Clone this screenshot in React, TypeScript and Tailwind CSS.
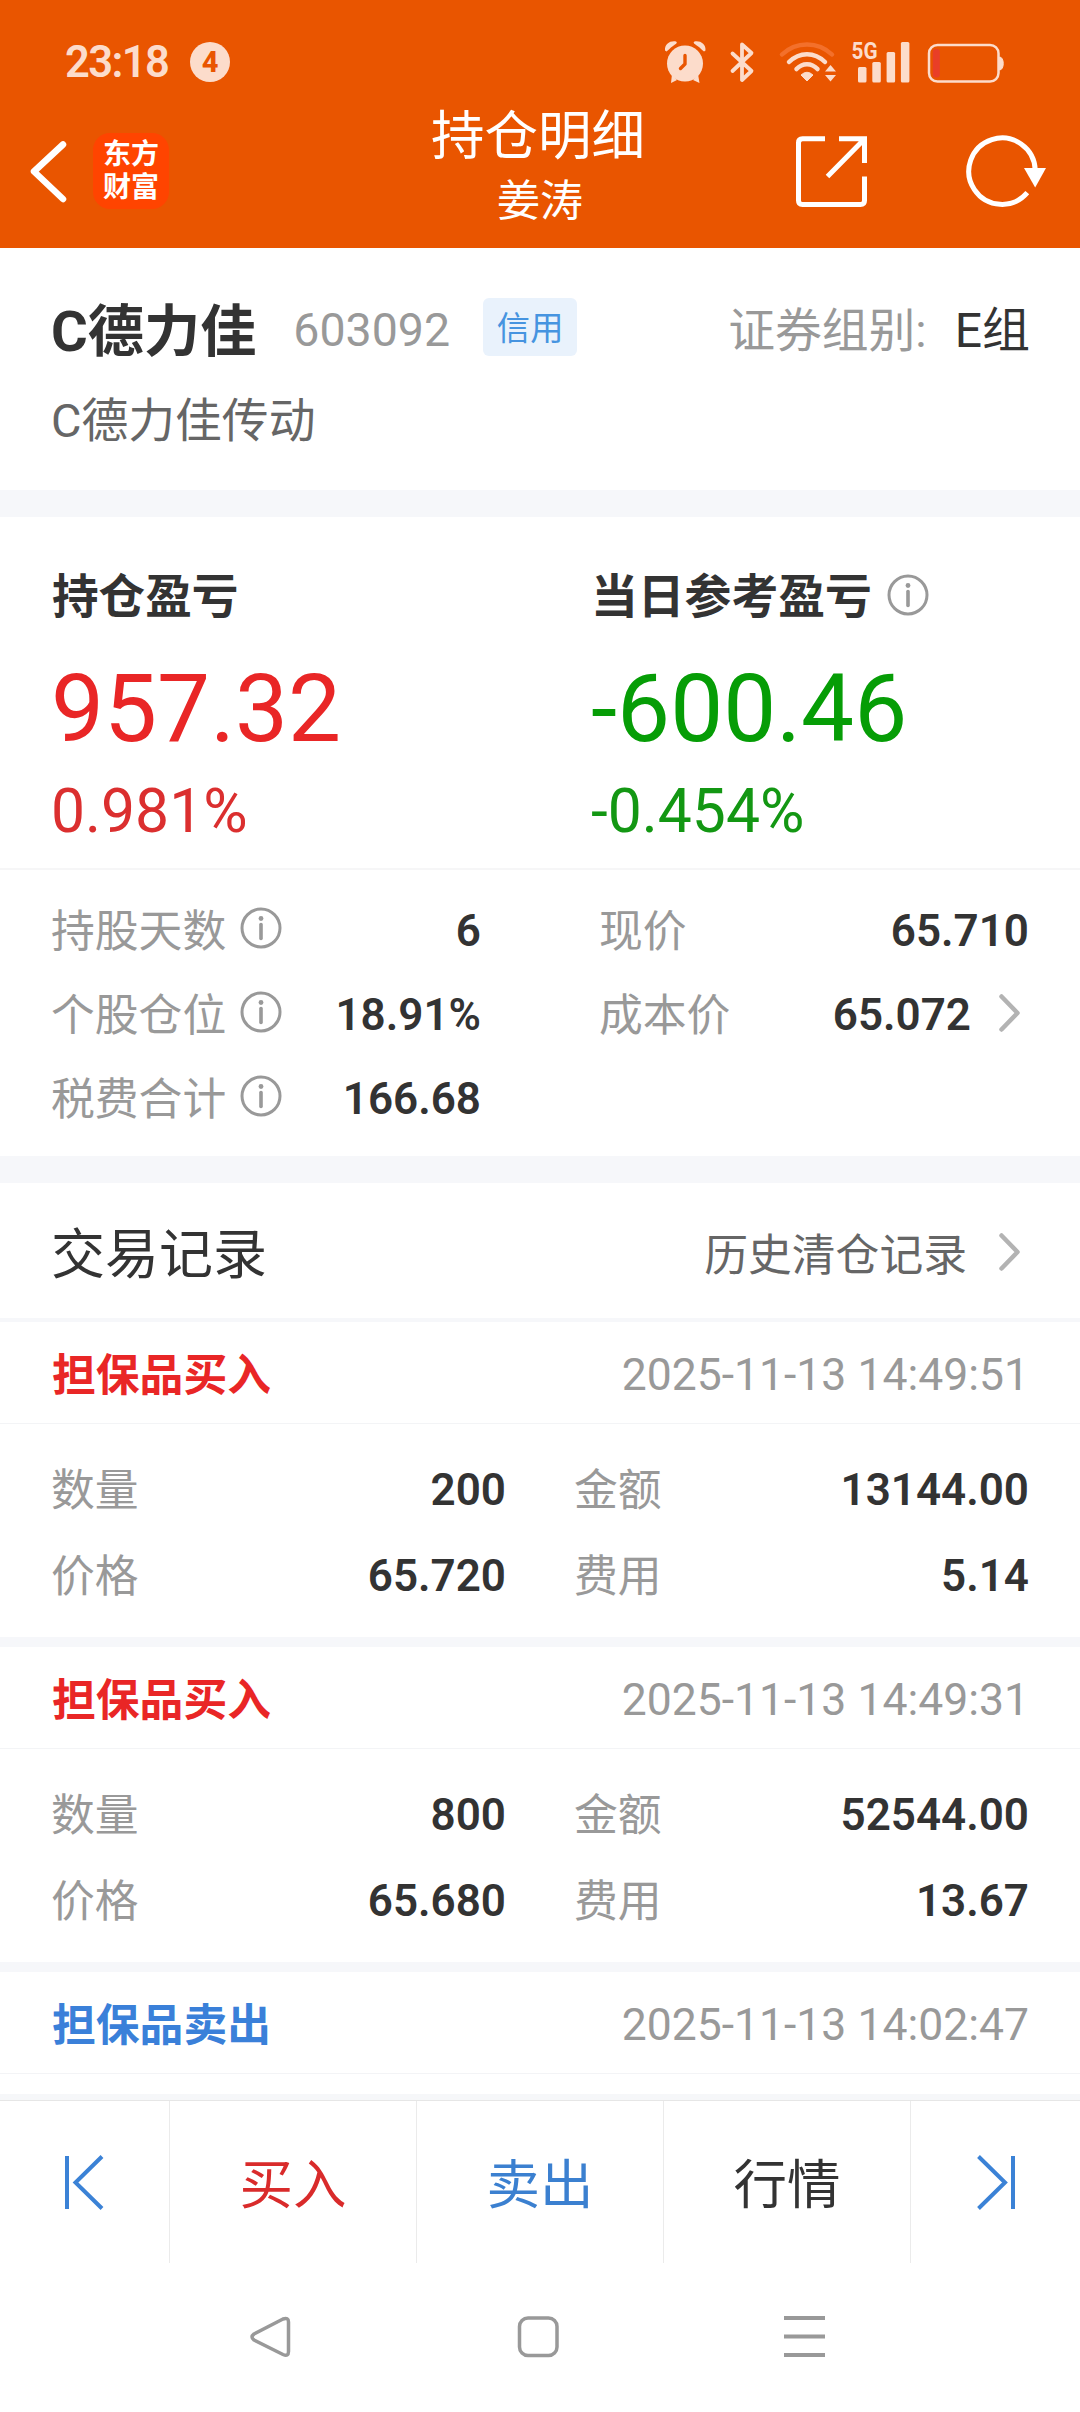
import type { ReactNode } from "react";

function InfoIcon({ className = "" }: { className?: string }) {
  return (
    <svg className={`h-[42px] w-[42px] shrink-0 ${className}`} viewBox="0 0 42 42" fill="none">
      <circle cx="21" cy="21" r="19" stroke="#999" strokeWidth="3" />
      <circle cx="21" cy="11.5" r="2.4" fill="#999" />
      <path d="M21 17.5v14" stroke="#999" strokeWidth="3.6" strokeLinecap="round" />
    </svg>
  );
}

function Chevron() {
  return (
    <svg className="h-10 w-6 shrink-0" viewBox="0 0 24 40" fill="none">
      <path d="M3.500 3.500L19.500 20L3.500 36.500" stroke="#b3b3b3" strokeWidth="4.500" strokeLinecap="round" strokeLinejoin="round" />
    </svg>
  );
}

function StatusIcons() {
  const c = "#fcdccb";
  return (
    <svg className="h-[50px] w-[344px]" viewBox="662 37 344 50" fill="none">
      <circle cx="685" cy="63.500" r="18" fill={c} />
      <path d="M672 74L671 83L677 80ZM698 74L699.500 83L693 80Z" fill={c} />
      <path d="M665 50.500C664.500 44 670 40.500 676 41.500C678 42.500 676 44 673 46C670 48 668 50.500 666.500 51.500ZM705.500 50.500C706 44 700.500 40.500 694.500 41.500C692.500 42.500 694.500 44 697.500 46C700.500 48 702.500 50.500 704 51.500Z" fill={c} />
      <path d="M685 55.500V64L680.500 68.500" stroke="#e95500" strokeWidth="3.400" strokeLinecap="round" strokeLinejoin="round" />
      <path d="M732.500 53.500L751.500 71L742 80V44.500L751.500 53L732.500 71" stroke={c} strokeWidth="3.800" strokeLinecap="round" strokeLinejoin="round" />
      <path d="M782 54.500C796 41 818 41 832 54.500" stroke="#f3702b" strokeWidth="4.500" strokeLinecap="round" />
      <path d="M789 62C799.500 51.500 814.500 51.500 825 62" stroke={c} strokeWidth="4.500" strokeLinecap="round" />
      <path d="M796.500 69C802.500 62.500 811.500 62.500 817.500 69" stroke={c} strokeWidth="4.500" strokeLinecap="round" />
      <path d="M801 75Q807 69.500 813 75L807 81Z" fill={c} stroke={c} strokeWidth="1" strokeLinejoin="round" />
      <path d="M825 71.500L830.500 65L836 71.500ZM825 75L830.500 81.500L836 75Z" fill={c} />
      <text x="851.500" y="58.500" fontSize="23" fontWeight="700" fontFamily="Roboto" textLength="26" lengthAdjust="spacingAndGlyphs" fill={c}>5G</text>
      <rect x="858" y="67" width="8.500" height="15.500" rx="1.500" fill={c} />
      <rect x="872.300" y="62" width="8.500" height="20.500" rx="1.500" fill={c} />
      <rect x="886.600" y="52" width="8.500" height="30.500" rx="1.500" fill={c} />
      <rect x="900.900" y="42" width="8.500" height="40.500" rx="1.500" fill={c} />
      <rect x="929" y="45" width="69.500" height="36.500" rx="8.500" stroke={c} strokeWidth="2.500" />
      <path d="M999.500 57C1004.500 57 1004.500 70 999.500 70Z" fill={c} stroke={c} />
      <rect x="932.800" y="49" width="7" height="28.500" rx="3" fill="#e93e27" />
    </svg>
  );
}

function Header() {
  return (
    <header className="flex h-[248px] shrink-0 flex-col bg-[#e95500] text-white">
      <div className="flex h-[100px] items-center justify-between pt-[24px] pr-[74px] pl-[65px] text-[#fcdccb]">
        <div className="flex items-center">
          <span className="relative top-px w-[125px] text-[43.500px] leading-none font-semibold tracking-[-1.600px]">23:18</span>
          <span className="flex size-10 items-center justify-center rounded-full bg-[#fcdccb] text-[29px] leading-none font-extrabold text-[#e95500]">4</span>
        </div>
        <StatusIcons />
      </div>
      <div className="grid h-[148px] grid-cols-[1fr_240px_1fr]">
        <div className="flex items-start pt-[33px] pl-7">
          <svg className="mt-[5px] h-[68px] w-[42px]" viewBox="28 138 42 68" fill="none">
            <path d="M63 144.500L34 171.500L63 199" stroke="white" strokeWidth="6.500" strokeLinecap="round" strokeLinejoin="round" />
          </svg>
          <div className="ml-[23px] flex size-[76px] flex-col items-center justify-center gap-[6px] rounded-[17px] bg-[#ff4400] text-[28px] leading-[27px] font-bold">
            <span>东方</span>
            <span>财富</span>
          </div>
        </div>
        <div className="flex flex-col items-center pt-[8px]">
          <h1 className="-ml-1 text-[53.500px] leading-[58px]">持仓明细</h1>
          <p className="mt-[10px] text-[43px] leading-[50px]">姜涛</p>
        </div>
        <div className="flex items-start justify-end pt-8 pr-8">
          <svg className="mr-[90px] h-[80px] w-[80px]" viewBox="792 132 80 80" fill="none" stroke="white" strokeWidth="5">
            <path d="M825 138.700H802.500Q798.500 138.700 798.500 142.700V200.500Q798.500 204.500 802.500 204.500H860.500Q864.500 204.500 864.500 200.500V176.500" />
            <path d="M839 138.700H864.500V163M864 139.500L827.500 176.500" />
          </svg>
          <svg className="h-[80px] w-[86px]" viewBox="962 132 86 80" fill="none">
            <path d="M1027.300 192.700A33.200 33.200 0 1 1 1035.200 170" stroke="white" strokeWidth="5" />
            <path d="M1024 168H1046L1035.200 187.500Z" fill="white" />
          </svg>
        </div>
      </div>
    </header>
  );
}

function Gap() {
  return <div className="h-[27px] shrink-0 bg-[#f6f7fa]" />;
}

function Metric({ label, info, children }: { label: string; info?: boolean; children: ReactNode }) {
  return (
    <div className="flex h-[84px] items-center justify-between">
      <span className="flex items-center text-[43.800px] text-[#999]">
        <span className="relative top-[3px]">{label}</span>
        {info && <InfoIcon className="relative -top-0.5 ml-[14px]" />}
      </span>
      <span className="flex items-center pt-0.5 text-[44px] font-semibold">{children}</span>
    </div>
  );
}

function Pair({ label, value }: { label: string; value: string }) {
  return (
    <div className="flex h-[86px] items-center justify-between">
      <span className="relative top-[2px] text-[43.800px] text-[#999]">{label}</span>
      <span className="text-[44px] font-semibold">{value}</span>
    </div>
  );
}

function RecordHead({ type, time }: { type: "买入" | "卖出"; time: string }) {
  return (
    <div className="flex h-[102px] items-center justify-between border-b border-[#f3f4f6] pt-1 pr-[51px] pl-[52px]">
      <span className={`relative top-[2px] text-[43.800px] font-bold ${type === "买入" ? "text-[#e92626]" : "text-[#3a80d9]"}`}>担保品{type}</span>
      <time className="pt-0.5 text-[44.500px] text-[#999]">{time}</time>
    </div>
  );
}

const records = [
  { time: "2025-11-13 14:49:51", qty: "200", amount: "13144.00", price: "65.720", fee: "5.14" },
  { time: "2025-11-13 14:49:31", qty: "800", amount: "52544.00", price: "65.680", fee: "13.67" },
];

export default function App() {
  return (
    <div className="flex h-[2412px] w-[1080px] flex-col overflow-hidden bg-white font-[Roboto,'Noto_Sans_CJK_SC',sans-serif] leading-none whitespace-nowrap text-[#333]">
      <Header />

      <section className="h-[242px] shrink-0 pt-[52px] pr-[50px] pl-[51px]">
        <div className="flex h-[60px] items-center">
          <h2 className="relative top-[2px] text-[56.200px] font-bold">C德力佳</h2>
          <span className="ml-[37px] text-[46.500px] text-[#999]">603092</span>
          <span className="mb-[7px] ml-[33px] flex h-[58px] w-[94px] items-center justify-center rounded-md bg-[#e9f2fc] text-[33.300px] text-[#4694e0]">
            <span className="relative top-[2px]">信用</span>
          </span>
          <span className="ml-auto pt-0.5 text-[46.800px] text-[#999]">证券组别:</span>
          <span className="ml-[28px] pt-0.5 text-[48px]">E组</span>
        </div>
        <p className="mt-[38px] text-[46.800px] text-[#666]">C德力佳传动</p>
      </section>
      <Gap />

      <section className="grid h-[353px] shrink-0 grid-cols-[540px_1fr] border-b-2 border-[#f6f6f7] pt-[50px] pl-[51px]">
        <div>
          <h3 className="flex h-[56px] items-center pt-1 pl-px text-[46.600px] font-bold">持仓盈亏</h3>
          <p className="mt-[39px] text-[94.400px] text-[#e92626]">957.32</p>
          <p className="mt-[26px] text-[60.600px] text-[#db2f2f]">0.981%</p>
        </div>
        <div>
          <h3 className="flex h-[56px] items-center text-[46.800px] font-bold">
            <span className="pt-1">当日参考盈亏</span>
            <InfoIcon className="ml-[15px]" />
          </h3>
          <p className="mt-[39px] text-[94.400px] text-[#069d06]">-600.46</p>
          <p className="mt-[26px] text-[60.600px] text-[#139713]">-0.454%</p>
        </div>
      </section>

      <section className="grid h-[286px] shrink-0 grid-cols-[430px_430px] justify-between pt-[18px] pr-[51px] pl-[51px]">
        <div>
          <Metric label="持股天数" info>6</Metric>
          <Metric label="个股仓位" info>18.91%</Metric>
          <Metric label="税费合计" info>166.68</Metric>
        </div>
        <div>
          <Metric label="现价">65.710</Metric>
          <Metric label="成本价">
            <span className="mr-[27px]">65.072</span>
            <span className="mr-[7px] -mt-1"><Chevron /></span>
          </Metric>
        </div>
      </section>
      <Gap />

      <section className="shrink-0">
        <div className="flex h-[139px] items-center justify-between border-b-4 border-[#f6f7fa] pt-1 pr-[58px] pl-[51px]">
          <h2 className="relative top-[3px] text-[54px]">交易记录</h2>
          <span className="flex items-center text-[43.800px] text-[#666]">
            <span className="relative top-[4px]">历史清仓记录</span>
            <span className="ml-[31px]"><Chevron /></span>
          </span>
        </div>
        {records.map((r) => (
          <article key={r.time} className="h-[325px] border-b-10 border-[#f6f7fa]">
            <RecordHead type="买入" time={r.time} />
            <div className="grid grid-cols-[455px_455px] justify-between pt-[23px] pr-[51px] pl-[51px]">
              <Pair label="数量" value={r.qty} />
              <Pair label="金额" value={r.amount} />
              <Pair label="价格" value={r.price} />
              <Pair label="费用" value={r.fee} />
            </div>
          </article>
        ))}
        <article className="h-[128px] border-b-6 border-[#f6f7f9]">
          <RecordHead type="卖出" time="2025-11-13 14:02:47" />
        </article>
      </section>

      <nav className="grid h-[163px] shrink-0 grid-cols-[170px_247px_247px_247px_169px] divide-x divide-[#ebebeb] border-t border-[#e6e6e6] text-[53.500px]">
        <button className="flex items-center justify-center pt-[2px]">
          <svg className="h-[60px] w-[44px]" viewBox="64 2153 44 60" fill="none" stroke="#3b82d6" strokeWidth="4">
            <path d="M68 2156V2209M103 2156.500L76.500 2182.500L103 2208.500" />
          </svg>
        </button>
        <button className="pt-[8px] text-[#d92b2b]">买入</button>
        <button className="pt-[8px] text-[#3b80d0]">卖出</button>
        <button className="pt-[8px]">行情</button>
        <button className="flex items-center justify-center pt-[2px]">
          <svg className="h-[60px] w-[44px]" viewBox="973 2153 44 60" fill="none" stroke="#3b82d6" strokeWidth="4">
            <path d="M1012 2156V2209M977.500 2156.500L1004 2182.500L977.500 2208.500" />
          </svg>
        </button>
      </nav>

      <nav className="flex h-[148px] shrink-0 items-center justify-between pr-[252px] pl-[248px]">
        <svg className="h-[46px] w-[46px]" viewBox="248 2314 46 46" fill="none" stroke="#999" strokeWidth="3.500" strokeLinejoin="round">
          <path d="M254 2334L283 2319Q288.500 2317 288.500 2322V2351.500Q288.500 2357 283 2354.500L254 2340Q250 2337 254 2334Z" />
        </svg>
        <svg className="h-[46px] w-[46px]" viewBox="515 2315 46 46" fill="none" stroke="#999" strokeWidth="3.500">
          <rect x="519.500" y="2319" width="37.500" height="37.500" rx="8.500" />
        </svg>
        <svg className="h-[46px] w-[46px]" viewBox="782 2315 46 46" stroke="#999" strokeWidth="4">
          <path d="M784 2319H825M784 2337.500H825M784 2356H825" />
        </svg>
      </nav>
    </div>
  );
}
